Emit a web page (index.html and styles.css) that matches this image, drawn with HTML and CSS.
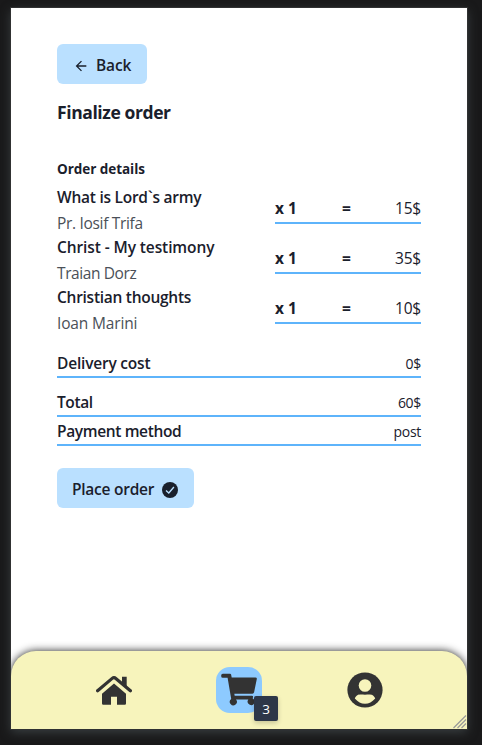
FILE: index.html
```html
<!DOCTYPE html>
<html lang="en">
<head>
<meta charset="utf-8">
<title>Finalize order</title>
<link rel="stylesheet" href="styles.css">
</head>
<body>
<div class="device">
  <main class="content">
    <button class="btn btn-back">
      <svg width="16" height="16" viewBox="0 0 24 24" fill="currentColor"><path d="M20 11H7.830l5.590-5.590L12 4l-8 8 8 8 1.410-1.410L7.830 13H20v-2z"/></svg>
      <span class="t-back">Back</span>
    </button>
    <h1>Finalize order</h1>
    <h2>Order details</h2>
    <ul class="items">
      <li class="item">
        <div class="book"><b class="t-b1">What is Lord`s army</b><span class="t-a1">Pr. Iosif Trifa</span></div>
        <div class="amount"><b>x 1</b><b>=</b><span>15$</span></div>
      </li>
      <li class="item">
        <div class="book"><b class="t-b2">Christ - My testimony</b><span class="t-a2">Traian Dorz</span></div>
        <div class="amount"><b>x 1</b><b>=</b><span>35$</span></div>
      </li>
      <li class="item">
        <div class="book"><b class="t-b3">Christian thoughts</b><span class="t-a3">Ioan Marini</span></div>
        <div class="amount"><b>x 1</b><b>=</b><span>10$</span></div>
      </li>
    </ul>
    <div class="line delivery"><b class="t-delivery">Delivery cost</b><span>0$</span></div>
    <div class="line total"><b class="t-total">Total</b><span>60$</span></div>
    <div class="line payment"><b class="t-payment">Payment method</b><span>post</span></div>
    <button class="btn btn-place">
      <span class="t-place">Place order</span>
      <svg width="16" height="16" viewBox="0 0 16 16"><circle cx="8" cy="8" r="8" fill="#1a202c"/><path d="M4 8.4l2.8 2.6L11.9 5" fill="none" stroke="#bae0ff" stroke-width="1.350"/></svg>
    </button>
  </main>
  <nav class="nav">
    <a class="nav-home">
      <svg width="36" height="29" viewBox="0 0 36 29" fill="#333"><path d="M1.600 14.800L16.200 2.400Q18 .9 19.800 2.400L34.400 14.800" fill="none" stroke="#333" stroke-width="3.200" stroke-linecap="round"/><path d="M26 .7h4.700v10.200L26 6.700z"/><path d="M18 7.500L30 17.800V27.500Q30 28.700 28.800 28.700H21V20.700H15V28.700H7.200Q6 28.700 6 27.500V17.800Z"/></svg>
    </a>
    <a class="nav-cart">
      <svg width="36" height="33" viewBox="0 0 36 33" fill="#333"><path d="M1.800 .7H9Q9.900 .7 10.100 1.600L10.700 4.500H34.500Q36 4.500 35.800 5.900L33.100 19.300Q32.800 20.700 31.400 20.700H13.300L13.700 22.700H30.900Q32.300 22.700 32 24L31.700 25.400A3.500 3.500 0 1 1 27.300 26.600H15A3.500 3.500 0 1 1 10.200 26.100L6.600 4.700H1.800Q.2 4.700 .2 3.200V2.200Q.2 .7 1.800 .7Z"/></svg>
      <span class="badge">3</span>
    </a>
    <a class="nav-user">
      <svg width="36" height="36" viewBox="0 0 36 36"><circle cx="18" cy="18" r="17.600" fill="#333"/><circle cx="18" cy="13.500" r="6.300" fill="#f7f4bc"/><path d="M7.800 26.500C10 21.500 13 22.700 18 22.700S26 21.500 28.200 26.500C25 30.200 22 31.700 18 31.700S11 30.200 7.800 26.500Z" fill="#f7f4bc"/></svg>
    </a>
    <svg class="grip" width="14" height="14" viewBox="0 0 14 14" stroke="#999" stroke-width="1.200"><path d="M.5 13L13 .5M4.500 13L13 4.500M8.500 13L13 8.500"/></svg>
  </nav>
</div>
</body>
</html>
```
FILE: styles.css
```css
* { box-sizing: border-box; margin: 0; padding: 0; }
body {
  height: 745px;
  padding: 8px 15px 16px 11px;
  overflow: hidden;
  background: #19191a;
  color: #1a202c;
  font-family: "Open Sans", "Noto Sans", sans-serif;
  font-size: 15.5px;
}
b { font-weight: 600; }
span, b { white-space: nowrap; }
svg { display: block; flex: none; }
.device {
  display: flex;
  flex-direction: column;
  height: 721px;
  overflow: hidden;
  background: #fff;
  outline: 1px solid #303132;
  box-shadow: 0 3px 10px #3b4143;
}
.content { flex: 1; padding: 36px 46px 0; }
.btn {
  display: flex;
  align-items: center;
  height: 40px;
  border: 0;
  border-radius: 6px;
  background: #bae0ff;
  color: #1a202c;
  font: 600 15.5px "Open Sans", "Noto Sans", sans-serif;
}
.btn span { margin-top: -2px; }
.btn-back { width: 90px; padding: 4px 0 0 16px; gap: 7px; }
.btn-place { width: 137px; padding: 4px 0 0 15px; gap: 8px; margin-top: 22px; }
.btn-place span { margin-top: -3px; }
h1 { height: 24px; margin-top: 16px; font-size: 17.5px; line-height: 24px; font-weight: 700; letter-spacing: -.4px; }
h2 { height: 20px; margin-top: 35px; font-size: 13.5px; line-height: 20px; font-weight: 700; letter-spacing: -.05px; }
.t-back { letter-spacing: -.1px; }
.t-b1 { letter-spacing: -.25px; }
.t-b2 { letter-spacing: -.1px; }
.t-b3 { letter-spacing: -.27px; }
.t-a1 { letter-spacing: -.32px; }
.t-a2 { letter-spacing: -.4px; }
.t-a3 { letter-spacing: -.15px; }
.t-delivery { letter-spacing: -.2px; }
.t-total { letter-spacing: -.4px; }
.t-payment { letter-spacing: -.36px; }
.t-place { letter-spacing: -.25px; }
.items { list-style: none; margin-top: 5px; }
.item { display: flex; justify-content: space-between; height: 50px; }
.book { display: flex; flex-direction: column; line-height: 26px; }
.book b { height: 26px; }
.book span { color: #4a5058; }
.amount {
  display: grid;
  grid-template-columns: 67px 1fr auto;
  width: 146px;
  height: 40px;
  padding-top: 11px;
  border-bottom: 2px solid #5eb4fb;
  line-height: 26px;
}
.amount b { font-weight: 700; }
.amount span { letter-spacing: -.2px; }
.line {
  display: flex;
  justify-content: space-between;
  border-bottom: 2px solid #5eb4fb;
  line-height: 22px;
}
.line span { font-size: 14px; letter-spacing: -.3px; line-height: 23px; }
.delivery { height: 26px; margin-top: 18px; }
.total { height: 26px; margin-top: 13px; }
.payment { height: 26px; margin-top: 3px; }
.nav {
  position: relative;
  display: grid;
  grid-template-columns: 36px 46px 36px;
  align-items: center;
  padding-left: 85px;
  column-gap: 84px;
  height: 78px;
  border-radius: 25px 25px 0 0;
  background: #f7f4bc;
  box-shadow: 0 0 8px #222;
}
.nav-user { padding-left: 1px; }
.nav-cart {
  position: relative;
  width: 46px;
  height: 46px;
  padding: 6px 0 0 5px;
  border-radius: 14px;
  background: #8dcaff;
}
.badge {
  position: absolute;
  left: 38px;
  top: 29px;
  width: 24px;
  height: 25px;
  border-radius: 2px;
  background: #2d3748;
  color: #fff;
  font-size: 13.5px;
  line-height: 26px;
  text-align: center;
  box-shadow: 0 2px 5px #0003;
}
.grip { position: absolute; right: 0; bottom: 0; }
```
